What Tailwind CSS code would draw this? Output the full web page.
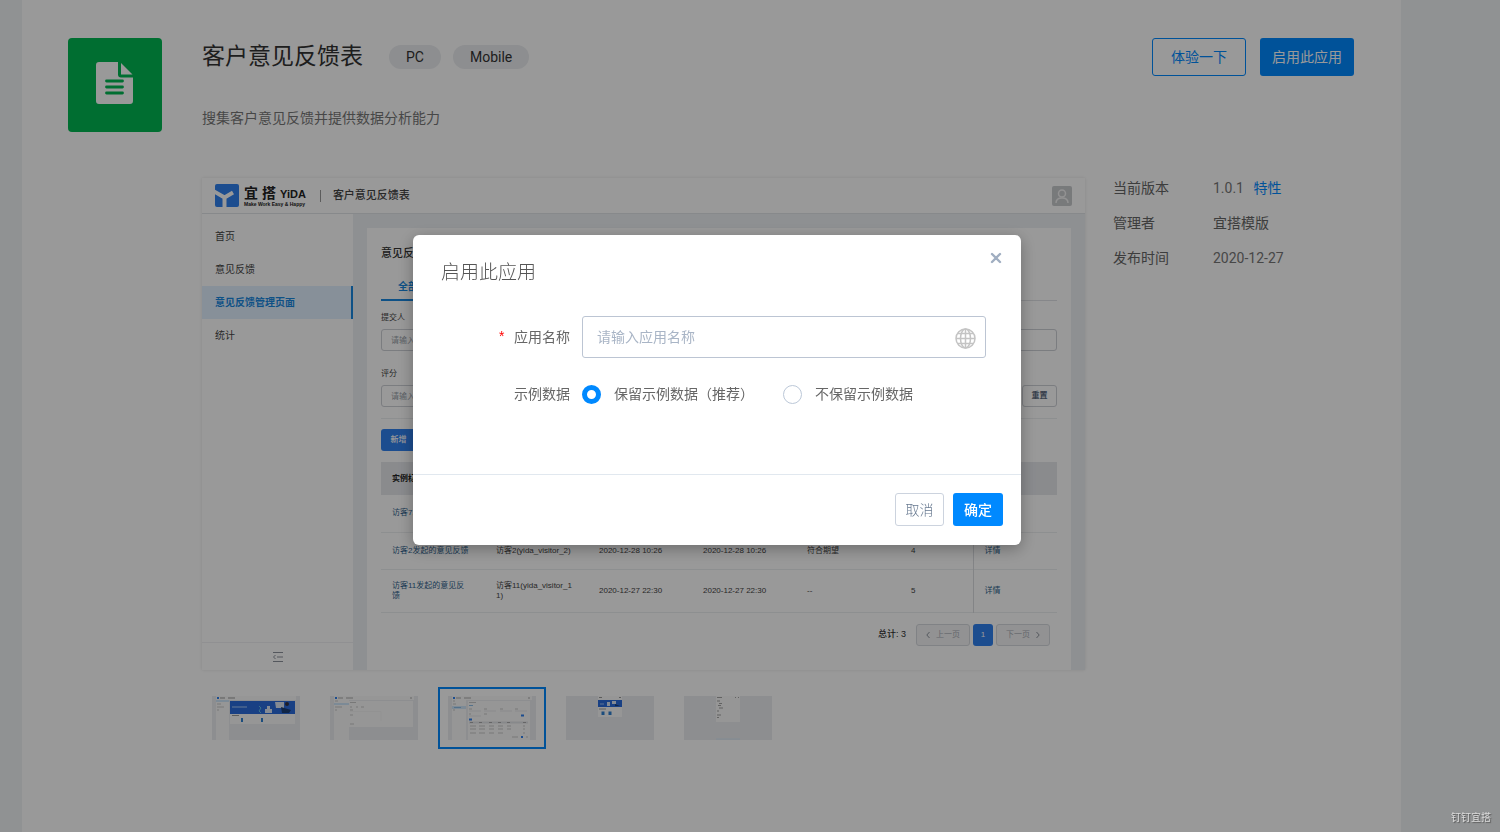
<!DOCTYPE html>
<html lang="zh-CN">
<head>
  <meta charset="UTF-8" />
  <meta name="viewport" content="width=device-width, initial-scale=1.0" />
  <title>客户意见反馈表</title>
  <script src="https://cdn.jsdelivr.net/npm/@tailwindcss/browser@4"></script>
</head>
<body class="bg-[#f1f3f6] min-h-screen text-sm text-[#666] font-[Roboto,'Noto_Sans_CJK_SC',sans-serif]">

  <main class="bg-white min-h-screen ml-[22px] mr-[99px] pl-[46px] pr-[47px] pt-[38px] pb-8 flex gap-10">
    <!-- App icon -->
    <div class="w-[94px] h-[94px] pb-1 shrink-0 rounded bg-[#00b853] flex items-center justify-center">
      <svg class="w-[38px] h-[42px]" viewBox="0 0 38 42">
        <path d="M3 0H22V12.500Q22 15.500 25 15.500H37V39Q37 42 34 42H3Q0 42 0 39V3Q0 0 3 0Z" fill="#fff" />
        <path d="M25 1L36.500 12.500H25Z" fill="#fff" />
        <path d="M10.500 19H26.500M10.500 25H26.500M10.500 31H26.500" stroke="#00b853" stroke-width="2.800" stroke-linecap="round" />
      </svg>
    </div>

    <div class="flex-1 min-w-0">
      <!-- Title row -->
      <header class="flex items-center h-[38px]">
        <h1 class="text-[23px] leading-8 text-[#333] mr-[26px]">客户意见反馈表</h1>
        <span class="h-6 px-[17px] mr-3 rounded-full bg-[#ebedf0] text-[#333] leading-6">PC</span>
        <span class="h-6 px-[17px] rounded-full bg-[#ebedf0] text-[#333] leading-6">Mobile</span>
        <button class="ml-auto w-[94px] h-[38px] rounded-[3px] border border-[#0089ff] text-[#0089ff]">体验一下</button>
        <button class="ml-[14px] w-[94px] h-[38px] rounded-[3px] bg-[#0089ff] text-white">启用此应用</button>
      </header>
      <p class="mt-8 leading-5 text-[#777]">搜集客户意见反馈并提供数据分析能力</p>

      <div class="flex gap-7 mt-[50px]">
        <!-- App preview -->
        <section class="flex-1 min-w-0 h-[492px] flex flex-col bg-white shadow-[0_0_3px_rgba(0,0,0,0.1)] text-[8px] text-[#444] font-['Liberation_Sans','Noto_Sans_CJK_SC',sans-serif]">
          <div class="h-9 shrink-0 flex items-center pl-[13px] pr-[13px] border-b border-[#e2e4e8]">
            <svg class="w-6 h-[23px] rounded-[2px]" viewBox="0 0 24 23">
              <rect width="24" height="23" fill="#2f80ee" />
              <path d="M-1 7.500L9.500 13.500V24M9.500 13.500L18 8.500" fill="none" stroke="#fff" stroke-width="4" />
            </svg>
            <div class="ml-[5px] text-[#222] font-bold">
              <div class="flex items-end gap-1 text-[14px] leading-4"><span>宜</span><span>搭</span><span class="text-[11px] leading-[14px]">YiDA</span></div>
              <div class="text-[5px] leading-[6px]">Make Work Easy &amp; Happy</div>
            </div>
            <span class="ml-[14px] w-px h-3 bg-[#999]"></span>
            <span class="ml-3 text-[11px] font-medium text-[#444]">客户意见反馈表</span>
            <svg class="ml-auto w-5 h-5" viewBox="0 0 20 20">
              <rect width="20" height="20" rx="2" fill="#c9cbce" />
              <circle cx="10" cy="7.500" r="3.500" fill="none" stroke="#f4f4f4" stroke-width="1.500" />
              <path d="M4 17Q4 12 10 12Q16 12 16 17" fill="none" stroke="#f4f4f4" stroke-width="1.500" />
            </svg>
          </div>
          <div class="flex-1 min-h-0 flex">
            <nav class="w-[151px] shrink-0 pt-[6px] flex flex-col text-[10px] leading-[33px]">
              <a href="#" class="pl-[13px]">首页</a>
              <a href="#" class="pl-[13px]">意见反馈</a>
              <a href="#" class="pl-[13px] font-bold text-[#1887e0] bg-[#e2f1ff] border-r-2 border-[#1887e0]">意见反馈管理页面</a>
              <a href="#" class="pl-[13px]">统计</a>
              <div class="mt-auto h-7 border-t border-[#f0f1f3] flex items-center justify-center">
                <svg class="w-3 h-[10px]" viewBox="0 0 12 10" fill="none" stroke="#8d929c"><path d="M1 .5H11M5 5H11M1 9.500H11M3.500 3L1.500 5L3.500 7" /></svg>
              </div>
            </nav>
            <div class="flex-1 min-w-0 bg-[#edf0f4] px-[14px] pt-[14px]">
              <div class="bg-white h-full px-[14px] pt-4">
                <h2 class="text-[11px] leading-[18px] font-medium text-[#333]">意见反馈管理页面</h2>
                <div class="mt-[15px] h-6 border-b border-[#e0e2e6] flex">
                  <a href="#" class="h-6 px-[17px] text-[10px] leading-5 font-bold text-[#1887e0] border-b-2 border-[#1887e0]">全部</a>
                </div>
                <div class="mt-[11px] leading-3"><label for="submitter">提交人</label></div>
                <input id="submitter" placeholder="请输入" class="mt-[5px] block w-full h-[22px] px-[9px] rounded-[3px] border border-[#cdd0d6] placeholder:text-[#999fa9]" />
                <div class="mt-[17px] leading-3"><label for="score">评分</label></div>
                <div class="mt-[5px] flex gap-2">
                  <input id="score" placeholder="请输入" class="w-50 h-[22px] px-[9px] rounded-[3px] border border-[#cdd0d6] placeholder:text-[#999fa9]" />
                  <button class="ml-auto w-[35px] h-[22px] rounded-[3px] border border-[#cdd0d6] font-bold text-[#5c6b80]">重置</button>
                </div>
                <div class="mt-[11px] border-t border-[#eceef0]"></div>
                <button class="mt-[10px] block w-[35px] h-[22px] rounded-[3px] bg-[#2f80ee] text-white font-medium">新增</button>
                <table class="mt-[11px] w-full table-fixed text-left leading-[10px]">
                  <colgroup><col class="w-[104px]" /><col class="w-[103px]" /><col class="w-[104px]" /><col class="w-[104px]" /><col class="w-[104px]" /><col class="w-[73px]" /><col /></colgroup>
                  <thead class="bg-[#e6e8ec] text-[#222]">
                    <tr class="h-[33px]">
                      <th class="pl-[11px]">实例标题</th><th class="pl-[11px]">发起人</th><th class="pl-[11px]">创建时间</th><th class="pl-[11px]">修改时间</th><th class="pl-[11px]">评价</th><th class="pl-[11px]">评分</th><th class="pl-[11px]">操作</th>
                    </tr>
                  </thead>
                  <tbody>
                    <tr class="h-[37px] border-b border-[#eceef0]">
                      <td class="pl-[11px] text-[#2f5f8c]">访客7发起的意见反馈</td><td class="pl-[11px]">访客7(yida_visitor_7)</td><td class="pl-[11px]">2020-12-28 10:26</td><td class="pl-[11px]">2020-12-28 10:26</td><td class="pl-[11px]">符合期望</td><td></td><td class="border-l border-l-[#dadce0]"></td>
                    </tr>
                    <tr class="h-[37px] border-b border-[#eceef0]">
                      <td class="pl-[11px] text-[#2f5f8c]">访客2发起的意见反馈</td><td class="pl-[11px]">访客2(yida_visitor_2)</td><td class="pl-[11px]">2020-12-28 10:26</td><td class="pl-[11px]">2020-12-28 10:26</td><td class="pl-[11px]">符合期望</td><td class="pl-[11px]">4</td><td class="pl-[11px] border-l border-l-[#dadce0]"><a href="#" class="text-[#2f5f8c]">详情</a></td>
                    </tr>
                    <tr class="h-[43px] border-b border-[#eceef0]">
                      <td class="pl-[11px] text-[#2f5f8c]">访客11发起的意见反<br />馈</td><td class="pl-[11px]">访客11(yida_visitor_1<br />1)</td><td class="pl-[11px]">2020-12-27 22:30</td><td class="pl-[11px]">2020-12-27 22:30</td><td class="pl-[11px]">--</td><td class="pl-[11px]">5</td><td class="pl-[11px] border-l border-l-[#dadce0]"><a href="#" class="text-[#2f5f8c]">详情</a></td>
                    </tr>
                  </tbody>
                </table>
                <div class="mt-[11px] pr-[7px] flex items-center justify-end gap-[3px]">
                  <span class="mr-[7px] text-[9px] font-medium text-[#333]">总计: 3</span>
                  <button class="w-[54px] h-[22px] rounded-[3px] border border-[#d6d9de] bg-[#f3f4f6] text-[#a9adb5] flex items-center justify-center gap-[6px]">
                    <svg class="w-1 h-2" viewBox="0 0 4 8" fill="none" stroke="#8d929b"><path d="M3.500 1L.8 4L3.500 7" /></svg>上一页
                  </button>
                  <button class="w-5 h-[22px] rounded-[3px] bg-[#2f80ee] text-white">1</button>
                  <button class="w-[54px] h-[22px] rounded-[3px] border border-[#d6d9de] bg-[#f3f4f6] text-[#a9adb5] flex items-center justify-center gap-[6px]">
                    下一页<svg class="w-1 h-2" viewBox="0 0 4 8" fill="none" stroke="#8d929b"><path d="M.5 1L3.200 4L.5 7" /></svg>
                  </button>
                </div>
              </div>
            </div>
          </div>
        </section>

        <!-- Version info -->
        <dl class="w-[241px] shrink-0 grid grid-cols-[100px_1fr] auto-rows-[20px] gap-y-[15px] content-start leading-5">
          <dt>当前版本</dt><dd class="text-[#777]">1.0.1 <a href="#" class="ml-[6px] text-[#0089ff]">特性</a></dd>
          <dt>管理者</dt><dd>宜搭模版</dd>
          <dt>发布时间</dt><dd class="text-[#777]">2020-12-27</dd>
        </dl>
      </div>

      <!-- Thumbnails -->
      <div class="flex gap-[10px] mt-[17px]">
        <button aria-label="预览 1" class="w-[108px] h-[62px] border-2 border-transparent px-2">
          <svg class="w-full" viewBox="0 0 88 44">
            <rect width="88" height="44" fill="#ebedf1" /><path d="M4 0H84V4H17V44H4Z" fill="#fafafa" />
            <rect x="5" y="1" width="2" height="2" fill="#2f80ee" /><path d="M8 2H13M16 2H23" stroke="#999" /><path d="M4 5H17" stroke="#cfe6fa" stroke-width="2" />
            <path d="M5 8H9M5 11H12M5 14H7" stroke="#bbb" stroke-width=".8" />
            <rect x="18" y="5" width="65" height="13" fill="#2b6bdc" /><path d="M20 11H35" stroke="#7fabf0" stroke-width="1.500" />
            <path d="M47 10L49 12L47 15L49 17" fill="none" stroke="#5fc0e8" /><path d="M53 17V13H60V17ZM55 13V10H58V13Z" fill="#dce6f5" /><path d="M63 6H72V12H64Z" fill="#dce6f5" /><path d="M69 11L79 14L77 17H70Z" fill="#1b3f76" /><circle cx="75" cy="8" r="2" fill="#334" />
            <rect x="18" y="18" width="65" height="10" fill="#fafafa" /><path d="M20 19.500H27" stroke="#999" />
            <path d="M30 22V26M50 22V26" stroke="#2f80d0" stroke-width="2" />
          </svg>
        </button>
        <button aria-label="预览 2" class="w-[108px] h-[62px] border-2 border-transparent px-2">
          <svg class="w-full" viewBox="0 0 88 44">
            <rect width="88" height="44" fill="#ebedf1" /><path d="M4 0H84V4H19V44H4Z" fill="#fafafa" /><rect x="19" y="5" width="64" height="26" fill="#fafafa" />
            <rect x="5" y="1" width="2" height="2" fill="#2f80ee" /><path d="M8 2H13M16 2H23M80 2H82" stroke="#aaa" /><path d="M4 8H19" stroke="#cfe6fa" stroke-width="2" />
            <path d="M5 5H8M5 11H12M5 14H7M20 6.500H26M20 11H22M26 11H28M31 11H34M20 14H23M20 19H23M20 28H24" stroke="#bbb" stroke-width=".8" />
            <path d="M20 15.500H51V25" fill="none" stroke="#eee" stroke-width=".5" />
          </svg>
        </button>
        <button aria-label="预览 3" class="w-[108px] h-[62px] border-2 border-[#0089ff] px-2">
          <svg class="w-full" viewBox="0 0 88 44">
            <rect width="88" height="44" fill="#ebedf1" /><path d="M4 0H84V4H18V44H4Z" fill="#fafafa" /><rect x="20" y="5" width="62" height="39" fill="#fafafa" />
            <rect x="5" y="1" width="2" height="2" fill="#2f80ee" /><path d="M8 2H13M16 2H23M80 2H82" stroke="#aaa" /><path d="M4 11.500H18" stroke="#cfe6fa" stroke-width="3" /><path d="M6 11.500H13M21 9.500H25" stroke="#8cbce6" />
            <path d="M5 5H7M5 8H8M5 14H7M21 6.500H28M21 13H24M36 13H39M52 13H55M67 13H70M21 18H23M36 18H39" stroke="#bbb" stroke-width=".8" />
            <path d="M21 15H33M36 15H48M52 15H64M67 15H79M21 20H33" stroke="#dedfe2" stroke-width=".7" />
            <path d="M21 23.500H24M73 19.500H76M73 41H75" stroke="#2f80ee" stroke-width="2" />
            <path d="M21 26.500H80" stroke="#e2e4e8" stroke-width="2" /><path d="M22 26.500H25M31 26.500H34M41 26.500H44M50 26.500H53M59 26.500H62M75 26.500H78" stroke="#999" stroke-width=".8" />
            <path d="M22 30H28M31 30H37M41 30H46M50 30H55M59 30H63M75 30H77M22 33H28M31 33H37M41 33H46M50 33H55M59 33H63M75 33H77M22 37H28M31 37H37M41 37H46M50 37H55M75 37H77M64 41H70M78 41H80" stroke="#bbb" stroke-width=".8" />
          </svg>
        </button>
        <button aria-label="预览 4" class="w-[108px] h-[62px] border-2 border-transparent px-2">
          <svg class="w-full" viewBox="0 0 88 44">
            <rect width="88" height="44" fill="#ebedf1" /><rect x="32" width="24" height="21" fill="#fafafa" /><path d="M33 1.500H36M53 1.500H55" stroke="#999" />
            <rect x="32" y="4" width="24" height="7" fill="#2b6bdc" /><path d="M34 8H38" stroke="#9fc3f7" /><path d="M41 10V6H44V10ZM46 5H50V8H46Z" fill="#dce6f5" /><path d="M49 8L54 10H49Z" fill="#1b3f76" />
            <path d="M33 13H40" stroke="#888" stroke-width=".8" /><path d="M37 15.500V19M44 15.500V19" stroke="#2f80d0" stroke-width="3" />
          </svg>
        </button>
        <button aria-label="预览 5" class="w-[108px] h-[62px] border-2 border-transparent px-2">
          <svg class="w-full" viewBox="0 0 88 44">
            <rect width="88" height="44" fill="#ebedf1" /><rect x="32" width="24" height="26" fill="#fafafa" />
            <path d="M33 1.500H38M51 1.500H52M54 1.500H55M33 5H36M35 7.500H38M34 9.500H37M35 12H39M33 15H35M33 19H37M33 21.500H35" stroke="#999" stroke-width=".9" /><path d="M32 43H56" stroke="#d6e8f7" />
          </svg>
        </button>
      </div>
    </div>
  </main>

  <!-- Dialog -->
  <div class="fixed inset-0 bg-black/40 flex items-start justify-center pt-[235px] pr-[66px]">
    <div role="dialog" aria-labelledby="dialogTitle" class="relative w-[608px] max-w-full bg-white rounded-md shadow-[0_4px_16px_rgba(0,0,0,0.3)]">
      <button aria-label="关闭" class="absolute top-[17px] right-[19px] w-3 h-3">
        <svg class="w-3 h-3" viewBox="0 0 12 12"><path d="M2 2L10 10M10 2L2 10" stroke="#a0aec1" stroke-width="2.400" stroke-linecap="round" /></svg>
      </button>
      <h2 id="dialogTitle" class="pt-[25px] pl-7 text-[19px] leading-[26px] font-light text-[#555]">启用此应用</h2>
      <form class="pt-[30px] pr-[35px] h-[188px]">
        <div class="flex items-center">
          <label for="appName" class="w-[157px] mr-3 text-right"><span class="mr-2 text-[#f00] font-['Liberation_Mono',monospace]">*</span>应用名称</label>
          <div class="relative flex-1">
            <input id="appName" placeholder="请输入应用名称" class="w-full h-[42px] pl-[14px] pr-10 rounded-[3px] border border-[#bcc5d3] placeholder:text-[#a9b5c6] outline-none" />
            <svg class="absolute right-[10px] top-3 w-[21px] h-[21px]" viewBox="0 0 21 21" fill="none" stroke="#c4c4c4" stroke-width="1.500">
              <circle cx="10.500" cy="10.500" r="9.500" /><ellipse cx="10.500" cy="10.500" rx="5" ry="9.500" /><path d="M10.500 1V20M1 10.500H20M2.500 5.500H18.500M2.500 15.500H18.500" />
            </svg>
          </div>
        </div>
        <fieldset class="mt-[26px] flex items-center leading-5">
          <legend class="float-left w-[157px] mr-3 text-right">示例数据</legend>
          <input type="radio" id="keep" name="sample" checked class="appearance-none w-[19px] h-[19px] rounded-full border border-[#bcc8d8] checked:border-[5px] checked:border-[#0089ff]" />
          <label for="keep" class="ml-[13px] w-[169px]">保留示例数据（推荐）</label>
          <input type="radio" id="drop" name="sample" class="appearance-none w-[19px] h-[19px] rounded-full border border-[#bcc8d8] checked:border-[5px] checked:border-[#0089ff]" />
          <label for="drop" class="ml-[13px]">不保留示例数据</label>
        </fieldset>
      </form>
      <footer class="border-t border-[#e1e8ef] pt-[18px] pb-[19px] pr-[18px] flex justify-end gap-[9px]">
        <button class="w-[49px] h-[33px] rounded-[3px] border border-[#ccd3de] font-light text-[#66788f]">取消</button>
        <button class="w-[50px] h-[33px] rounded-[3px] bg-[#0089ff] font-medium text-white">确定</button>
      </footer>
    </div>
  </div>

  <div class="fixed right-[9px] bottom-[6px] text-[10px] leading-4 text-[#ddd] [text-shadow:1px_1px_1px_#555]">钉钉宜搭</div>
</body>
</html>
